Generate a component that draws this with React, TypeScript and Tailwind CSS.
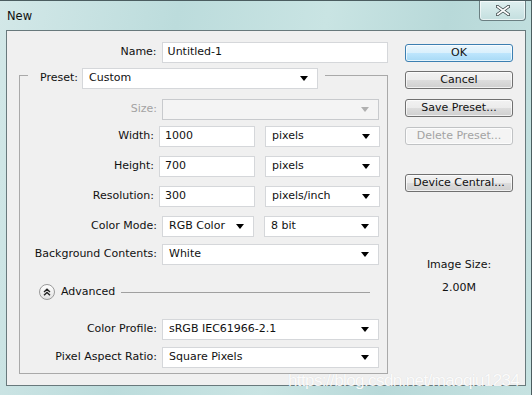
import type { ReactNode } from 'react'

const font = { fontFamily: '"DejaVu Sans", "Liberation Sans", sans-serif' }

function Arrow({ disabled }: { disabled?: boolean }) {
  return (
    <svg width="8" height="5" viewBox="0 0 8 5" className="shrink-0">
      <path d="M0 0h8L4 5z" fill={disabled ? '#b0b0b0' : '#000'} />
    </svg>
  )
}

function Field({ value, className }: { value: string; className: string }) {
  return (
    <div
      className={`flex h-[21px] items-center border border-[#d5d7da] bg-white pl-[5px] text-[#111] ${className}`}
    >
      {value}
    </div>
  )
}

function Select({
  value,
  className,
  disabled,
}: {
  value?: string
  className: string
  disabled?: boolean
}) {
  return (
    <div
      className={`flex h-[21px] items-center justify-between border pl-[6px] pr-[9px] text-[#111] ${
        disabled ? 'border-[#c8cacd] bg-[#f4f4f4]' : 'border-[#d5d7da] bg-white'
      } ${className}`}
    >
      <span>{value}</span>
      <Arrow disabled={disabled} />
    </div>
  )
}

function Row({
  label,
  children,
  disabled,
  className,
}: {
  label: string
  children: ReactNode
  disabled?: boolean
  className: string
}) {
  return (
    <div className={`flex items-center pr-[7px] ${className}`}>
      <div className={`w-[137px] text-right ${disabled ? 'text-[#a3a3a3]' : 'text-[#111]'}`}>
        {label}
      </div>
      <div className="ml-[5px] flex gap-[10px]">{children}</div>
    </div>
  )
}

function Button({
  label,
  primary,
  disabled,
  className,
}: {
  label: string
  primary?: boolean
  disabled?: boolean
  className: string
}) {
  const look = primary
    ? 'border-[#3c7fb1] bg-[linear-gradient(#eaf6fd,#d9f0fc_50%,#bee6fd_50%,#a7d9f5)] text-[#111]'
    : disabled
      ? 'border-[#c0c2c4] bg-[#f4f4f4] text-[#a3a3a3]'
      : 'border-[#707070] bg-[linear-gradient(#f2f2f2,#ebebeb_50%,#dddddd_50%,#cfcfcf)] text-[#111]'
  return (
    <div
      className={`flex h-[18px] w-[108px] items-center justify-center rounded-[3px] border shadow-[inset_0_0_0_1px_rgba(255,255,255,0.7)] ${look} ${className}`}
    >
      {label}
    </div>
  )
}

export default function App() {
  return (
    <div
      style={font}
      className="relative h-[395px] w-[532px] overflow-hidden border-t border-r border-[#4b5d60] bg-[linear-gradient(100deg,#d3e8e8,#bcdcdc_30%,#c9e4e3_55%,#b8d9d9_75%,#c6e2e1)] text-[11px]"
    >
      {/* title bar */}
      <div className="flex h-[29px] items-start">
        <span className="pl-[7px] pt-[8px] text-[11.5px] leading-[14px] text-[#111]">New</span>
        <div className="ml-auto mr-[5px] flex h-[20px] w-[47px] items-center justify-center rounded-b-[4px] border border-t-0 border-[#6b7f82] bg-[linear-gradient(#dff0f0,#c4dfdf)] shadow-[inset_0_0_0_1px_rgba(255,255,255,0.6)]">
          <svg width="14" height="11" viewBox="0 0 14 11">
            <path
              d="M1.5 1.5L12.5 9.5M12.5 1.5L1.5 9.5"
              stroke="#3b4648"
              strokeWidth="3.4"
              strokeLinecap="round"
            />
            <path
              d="M1.5 1.5L12.5 9.5M12.5 1.5L1.5 9.5"
              stroke="#ffffff"
              strokeWidth="1.6"
              strokeLinecap="round"
            />
          </svg>
        </div>
      </div>

      {/* client area */}
      <div className="ml-[6px] flex h-[356px] w-[520px] border border-[#68797c] bg-[#f0f0f0]">
        {/* left column */}
        <div className="w-[381px] pt-[11px]">
          <div className="flex items-center">
            <div className="w-[150px] text-right text-[#111]">Name:</div>
            <Field value="Untitled-1" className="ml-[5px] w-[227px]" />
          </div>

          {/* preset group */}
          <div className="ml-[12px] mt-[12px] w-[369px] border border-[#a9a9a9] pb-[5px]">
            <div className="-mt-[8px] ml-[8px] flex w-fit items-center bg-[#f0f0f0] pl-[12px] pr-[7px]">
              <span className="text-[#111]">Preset:</span>
              <Select value="Custom" className="ml-[4px] w-[236px]" />
            </div>

            <Row label="Size:" disabled className="mt-[10px]">
              <Select disabled className="w-[217px]" />
            </Row>
            <Row label="Width:" className="mt-[6px]">
              <Field value="1000" className="w-[96px]" />
              <Select value="pixels" className="w-[115px]" />
            </Row>
            <Row label="Height:" className="mt-[9px]">
              <Field value="700" className="w-[96px]" />
              <Select value="pixels" className="w-[115px]" />
            </Row>
            <Row label="Resolution:" className="mt-[9px]">
              <Field value="300" className="w-[96px]" />
              <Select value="pixels/inch" className="w-[115px]" />
            </Row>
            <Row label="Color Mode:" className="mt-[9px]">
              <Select value="RGB Color" className="w-[92px]" />
              <Select value="8 bit" className="w-[115px]" />
            </Row>
            <Row label="Background Contents:" className="mt-[7px]">
              <Select value="White" className="w-[217px]" />
            </Row>

            <div className="mt-[19px] flex h-[16px] items-center pl-[19px] pr-[17px]">
              <div className="flex h-[16px] w-[16px] items-center justify-center rounded-full border border-[#9a9a9a] bg-[linear-gradient(#ffffff,#e2e2e2)]">
                <svg width="8" height="8" viewBox="0 0 8 8">
                  <path
                    d="M1 4L4 1.2L7 4M1 7.2L4 4.4L7 7.2"
                    fill="none"
                    stroke="#222"
                    strokeWidth="1.4"
                  />
                </svg>
              </div>
              <span className="ml-[6px] text-[#111]">Advanced</span>
              <div className="ml-[6px] h-px flex-1 bg-[#a0a0a0]" />
            </div>

            <Row label="Color Profile:" className="mt-[19px]">
              <Select value="sRGB IEC61966-2.1" className="w-[217px]" />
            </Row>
            <Row label="Pixel Aspect Ratio:" className="mt-[7px]">
              <Select value="Square Pixels" className="w-[217px]" />
            </Row>
          </div>
        </div>

        {/* right column */}
        <div className="ml-[17px] flex w-[108px] flex-col pt-[13px]">
          <Button label="OK" primary className="" />
          <Button label="Cancel" className="mt-[9px]" />
          <Button label="Save Preset..." className="mt-[10px]" />
          <Button label="Delete Preset..." disabled className="mt-[10px]" />
          <Button label="Device Central..." className="mt-[29px]" />
          <div className="mt-[66px] text-center leading-[14px] text-[#111]">Image Size:</div>
          <div className="mt-[9px] text-center leading-[14px] text-[#111]">2.00M</div>
        </div>
      </div>

      {/* watermark */}
      <div
        style={{ fontFamily: '"Liberation Sans", Arial, sans-serif' }}
        className="absolute left-[288px] top-[367px] text-[17px] tracking-[-0.6px] text-white/90 [text-shadow:0_0_1px_rgba(0,0,0,0.12)]"
      >
        https://blog.csdn.net/maoqiu1234
      </div>
    </div>
  )
}
